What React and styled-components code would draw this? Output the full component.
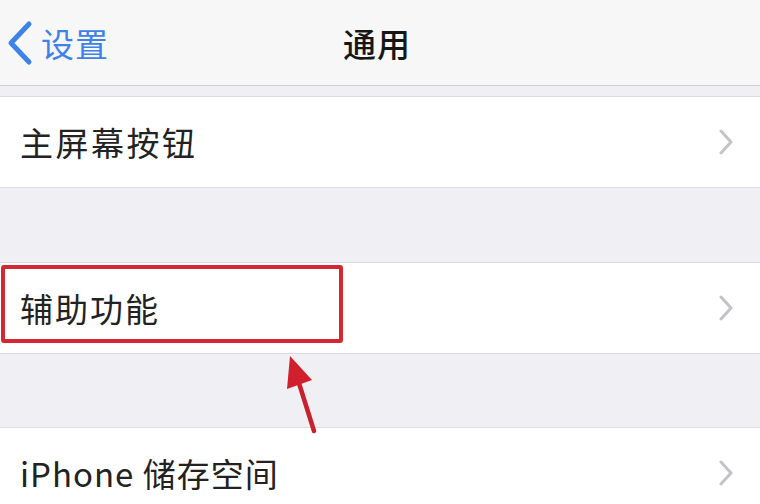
import React from 'react';
import styled, { createGlobalStyle } from 'styled-components';

const GlobalStyle = createGlobalStyle`
	html, body {
		margin: 0;
		padding: 0;
		background: #efeff4;
	}
	body {
		font-family: "Noto Sans CJK SC", "Noto Sans", sans-serif;
		-webkit-font-smoothing: antialiased;
	}
`;

const Page = styled.div`
	position: relative;
	width: 760px;
	height: 504px;
	overflow: hidden;
	background: #efeff4;
`;

const NavBar = styled.header`
	position: relative;
	display: flex;
	align-items: center;
	justify-content: center;
	height: 85px;
	background: #f7f7f8;
	border-bottom: 1px solid #cfcfd3;
`;

const BackButton = styled.div`
	position: absolute;
	left: 6px;
	top: 0;
	bottom: 0;
	display: flex;
	align-items: center;
	gap: 7px;
	color: #3d82e8;
	font-size: 33px;
	letter-spacing: 1px;
`;

const Title = styled.h1`
	margin: 0 0 0 -6px;
	font-size: 33px;
	font-weight: 500;
	color: #161616;
	letter-spacing: 1px;
`;

const Gap = styled.div`
	height: ${(props) => props.h}px;
`;

const Section = styled.section`
	background: #ffffff;
	border-top: 1px solid #dcdce0;
	border-bottom: 1px solid #dcdce0;
`;

const Row = styled.div`
	position: relative;
	display: flex;
	align-items: center;
	justify-content: space-between;
	height: ${(props) => props.h || 90}px;
	padding: 0 26px 0 20px;
	box-sizing: border-box;
`;

const Label = styled.span`
	font-size: 33px;
	color: #222222;
	letter-spacing: ${(props) => props.spacing ?? 2}px;
`;

const Highlight = styled.div`
	position: absolute;
	left: 1px;
	top: 2px;
	width: 342px;
	height: 78px;
	box-sizing: border-box;
	border: 4px solid #d22833;
	border-radius: 3px;
	pointer-events: none;
`;

const Overlay = styled.svg`
	position: absolute;
	left: 0;
	top: 0;
	pointer-events: none;
`;

const Chevron = () => (
	<svg width="16" height="26" viewBox="0 0 16 26">
		<path d="M3 2 L13 13 L3 24" fill="none" stroke="#c4c4c8" strokeWidth="3" strokeLinecap="round" strokeLinejoin="round" />
	</svg>
);

const BackChevron = () => (
	<svg width="28" height="46" viewBox="0 0 28 46">
		<path d="M23 4 L5 23 L23 42" fill="none" stroke="#3d82e8" strokeWidth="5" strokeLinecap="round" strokeLinejoin="round" />
	</svg>
);

const App = () => {
	return (
		<Page>
			<GlobalStyle />
			<NavBar>
				<BackButton>
					<BackChevron />
					<span>设置</span>
				</BackButton>
				<Title>通用</Title>
			</NavBar>
			<Gap h={10} />
			<Section>
				<Row>
					<Label spacing={2.5}>主屏幕按钮</Label>
					<Chevron />
				</Row>
			</Section>
			<Gap h={74} />
			<Section>
				<Row>
					<Label>辅助功能</Label>
					<Chevron />
					<Highlight />
				</Row>
			</Section>
			<Gap h={73} />
			<Section>
				<Row>
					<Label spacing={1}>iPhone 储存空间</Label>
					<Chevron />
				</Row>
			</Section>
			<Overlay width="760" height="504" viewBox="0 0 760 504">
				<line x1="314" y1="431" x2="298" y2="380" stroke="#c9202e" strokeWidth="4.5" strokeLinecap="round" />
				<polygon points="290,356 312,380 287,389" fill="#d0202e" />
			</Overlay>
		</Page>
	);
};

export default App;
